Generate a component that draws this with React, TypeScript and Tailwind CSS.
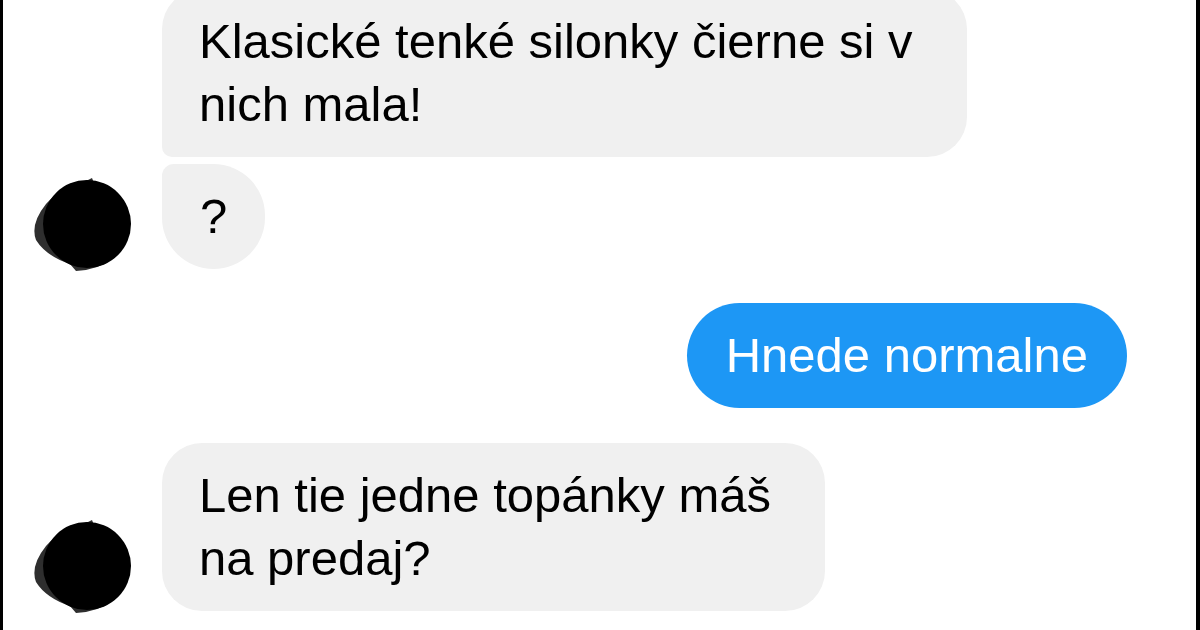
import React from "react";

function Avatar() {
  return (
    <svg width="101" height="94" viewBox="0 0 101 94" className="shrink-0 -mb-[3px]">
      {/* scribbled-out profile picture */}
      <path
        d="M14 26 Q30 8 56 2 L60 0 L62 5 Q88 10 98 40 Q100 62 82 80 Q66 92 44 93 L38 86 Q14 78 4 62 Q-2 46 14 26 Z"
        fill="#2e2e2e"
      />
      <circle cx="55" cy="46" r="44" fill="#000" />
    </svg>
  );
}

export default function App() {
  return (
    <div
      className="w-[1200px] h-[630px] overflow-hidden bg-white border-l-[3px] border-r-4 border-black text-[49px] leading-[63px] text-black"
      style={{ fontFamily: '"Liberation Sans", Arial, sans-serif' }}
    >
      <div className="flex flex-col">
        {/* Incoming group */}
        <div className="flex items-end gap-[29px] pl-[29px] -mt-[11px]">
          <Avatar />
          <div className="flex flex-col items-start gap-[7px]">
            <div className="w-[805px] px-[37px] py-[21px] bg-[#f0f0f0] rounded-[40px] rounded-bl-[10px]">
              Klasické tenké silonky čierne si v nich mala!
            </div>
            <div className="px-[38px] py-[21px] bg-[#f0f0f0] rounded-[52px] rounded-tl-[12px]">
              ?
            </div>
          </div>
        </div>

        {/* Outgoing */}
        <div className="flex justify-end pr-[69px] mt-[34px]">
          <div className="px-[39px] py-[21px] bg-[#1d97f5] text-white rounded-full">
            Hnede normalne
          </div>
        </div>

        {/* Incoming */}
        <div className="flex items-end gap-[29px] pl-[29px] mt-[35px]">
          <Avatar />
          <div className="w-[663px] px-[37px] py-[21px] bg-[#f0f0f0] rounded-[40px]">
            Len tie jedne topánky máš na predaj?
          </div>
        </div>
      </div>
    </div>
  );
}
